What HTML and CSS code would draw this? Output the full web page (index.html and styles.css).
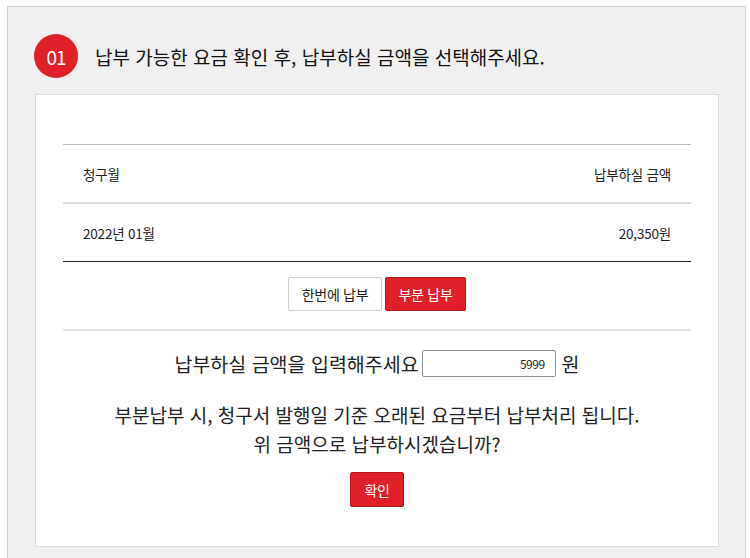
FILE: index.html
```html
<!DOCTYPE html>
<html lang="ko">
<head>
<meta charset="utf-8">
<link rel="stylesheet" href="styles.css">
</head>
<body>
<div class="wrap">
  <div class="head">
    <span class="num">01</span>
    <h2 class="title">납부 가능한 요금 확인 후, 납부하실 금액을 선택해주세요.</h2>
  </div>
  <div class="card">
    <div class="table">
      <div class="row th"><span>청구월</span><span>납부하실 금액</span></div>
      <div class="row td"><span>2022년 01월</span><span>20,350원</span></div>
    </div>
    <div class="tabs">
      <button class="btn ghost">한번에 납부</button>
      <button class="btn red">부분 납부</button>
    </div>
    <div class="amount">
      <span>납부하실 금액을 입력해주세요</span>
      <input class="inp" type="text" value="5999">
      <span>원</span>
    </div>
    <p class="notice">부분납부 시, 청구서 발행일 기준 오래된 요금부터 납부처리 됩니다.<br>위 금액으로 납부하시겠습니까?</p>
    <div class="ok"><button class="btn red confirm">확인</button></div>
  </div>
</div>
</body>
</html>
```

FILE: styles.css
```css
html, body { margin: 0; padding: 0; background: #fff; }
body { font-family: "Noto Sans CJK KR", "Noto Sans", sans-serif; color: #222; }
.wrap {
  margin: 6px 0 0 7px;
  width: 737px;
  height: 551px;
  background: #f0f0f0;
  border: 1px solid #cfcfcf;
  border-bottom: none;
  box-sizing: content-box;
  overflow: hidden;
}
.head { display: flex; align-items: center; padding: 27px 0 0 26px; height: 44px; }
.num {
  width: 44px; height: 44px; border-radius: 50%;
  background: #df2027; color: #fff;
  display: flex; align-items: center; justify-content: center;
  font-size: 19px; letter-spacing: -1px;
}
.title { margin: 0 0 0 17px; font-size: 19px; font-weight: 400; letter-spacing: 0; color: #111; }
.card {
  margin: 16px 26px 0 27px;
  background: #fff;
  border: 1px solid #dcdcdc;
  padding: 49px 27px 39px;
}
.table { border-top: 1px solid #bdbdbd; border-bottom: 1px solid #222; }
.row { display: flex; justify-content: space-between; align-items: center; padding: 0 20px; font-size: 13.5px; letter-spacing: -0.2px; }
.th { height: 57px; border-bottom: 2px solid #dedede; }
.td { height: 57px; }
.tabs { display: flex; justify-content: center; gap: 3px; padding: 15px 0 18px; border-bottom: 2px solid #e2e2e2; }
.btn { font-family: inherit; font-size: 14px; letter-spacing: -0.3px; height: 34px; border-radius: 2px; cursor: pointer; padding: 0; }
.ghost { width: 94px; background: #fff; border: 1px solid #cfcfcf; color: #222; }
.red { width: 81px; background: #df2027; border: 1px solid #b3161c; color: #fff; }
.amount { display: flex; align-items: center; justify-content: center; margin-top: 18px; font-size: 19.5px; letter-spacing: 0; }
.inp {
  width: 134px; height: 27px; box-sizing: border-box; margin: 0 6px 0 3px;
  border: 1px solid #8f8f8f; border-radius: 2px; text-align: right;
  font-family: inherit; font-size: 12px; letter-spacing: -0.5px; padding: 0 10px; color: #222;
}
.notice { margin: 22px 0 0; text-align: center; font-size: 19px; line-height: 29px; letter-spacing: 0; }
.ok { display: flex; justify-content: center; margin-top: 14px; }
.confirm { width: 54px; height: 35px; }
```
